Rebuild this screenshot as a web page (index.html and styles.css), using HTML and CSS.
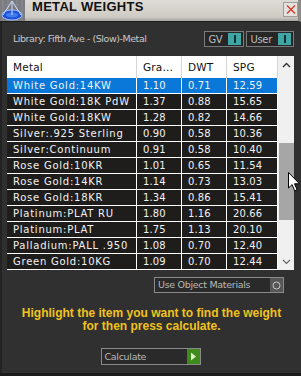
FILE: index.html
```html
<!doctype html>
<html lang="en">
<head>
<meta charset="utf-8">
<title>Metal Weights</title>
<link rel="stylesheet" href="styles.css">
</head>
<body>
<div class="win">
  <header class="titlebar">
    <span class="logo">
      <svg width="25" height="22" viewBox="0 0 25 22">
        <rect width="25" height="22" fill="#7a7c82"/>
        <path d="M3 0v22M8 0v22M17 0v22M22 0v22" stroke="#8c8e94" stroke-width="1"/>
        <ellipse cx="12" cy="15" rx="10" ry="5" fill="#1d4fd6"/>
        <ellipse cx="12" cy="15" rx="6" ry="2.6" fill="#3f7cf0"/>
        <path d="M12 1L3 15M12 1L21 15M12 1v14" stroke="#cfe0ff" stroke-width="1" fill="none"/>
        <ellipse cx="12" cy="15" rx="10" ry="5" fill="none" stroke="#9fc0ff" stroke-width="1"/>
      </svg>
    </span>
    <h1>METAL WEIGHTS</h1>
    <span class="close">
      <svg width="12" height="11" viewBox="0 0 12 11"><path d="M2 1.5l8 8M10 1.5l-8 8" stroke="#d23a2a" stroke-width="1.4"/></svg>
    </span>
  </header>

  <main class="panel">
    <div class="libbar">
      <span class="lib">Library: Fifth Ave - (Slow)-Metal</span>
      <span class="tog">GV<i></i></span>
      <span class="tog">User<i></i></span>
    </div>

    <div class="list">
      <div class="tbl">
        <div class="head"><span>Metal</span><span>Gra...</span><span>DWT</span><span>SPG</span></div>
        <div class="rows">
          <div class="row sel"><span>White Gold:14KW</span><span>1.10</span><span>0.71</span><span>12.59</span></div>
          <div class="row"><span>White Gold:18K PdW</span><span>1.37</span><span>0.88</span><span>15.65</span></div>
          <div class="row"><span>White Gold:18KW</span><span>1.28</span><span>0.82</span><span>14.66</span></div>
          <div class="row"><span>Silver:.925 Sterling</span><span>0.90</span><span>0.58</span><span>10.36</span></div>
          <div class="row"><span>Silver:Continuum</span><span>0.91</span><span>0.58</span><span>10.40</span></div>
          <div class="row"><span>Rose Gold:10KR</span><span>1.01</span><span>0.65</span><span>11.54</span></div>
          <div class="row"><span>Rose Gold:14KR</span><span>1.14</span><span>0.73</span><span>13.03</span></div>
          <div class="row"><span>Rose Gold:18KR</span><span>1.34</span><span>0.86</span><span>15.41</span></div>
          <div class="row"><span>Platinum:PLAT RU</span><span>1.80</span><span>1.16</span><span>20.66</span></div>
          <div class="row"><span>Platinum:PLAT</span><span>1.75</span><span>1.13</span><span>20.10</span></div>
          <div class="row"><span>Palladium:PALL .950</span><span>1.08</span><span>0.70</span><span>12.40</span></div>
          <div class="row"><span>Green Gold:10KG</span><span>1.09</span><span>0.70</span><span>12.44</span></div>
        </div>
      </div>
      <div class="scroll">
        <span class="arrow">
          <svg width="9" height="6" viewBox="0 0 9 6"><path d="M1 5l3.5-3.5L8 5" stroke="#333" stroke-width="1.4" fill="none"/></svg>
        </span>
        <span class="track"><span class="thumb"></span></span>
        <span class="arrow">
          <svg width="9" height="6" viewBox="0 0 9 6"><path d="M1 1l3.5 3.5L8 1" stroke="#666" stroke-width="1.2" fill="none"/></svg>
        </span>
      </div>
    </div>

    <div class="opts">
      <span class="pick">Use Object Materials<b><svg width="9" height="9" viewBox="0 0 9 9"><circle cx="4.5" cy="4.5" r="3.5" stroke="#c8c8c8" fill="none"/></svg></b></span>
    </div>

    <p class="hint">Highlight the item you want to find the weight<br>for then press calculate.</p>

    <div class="calc">
      <span class="pick">Calculate<b class="go"><svg width="7" height="9" viewBox="0 0 7 9"><path d="M1 0.5l5 4-5 4z" fill="#d8f5c0"/></svg></b></span>
    </div>
  </main>

  <!-- mouse pointer -->
  <svg class="cursor" width="13" height="20" viewBox="0 0 13 20">
    <path d="M0.5 0.5v15.5l3.6-3.4 2.6 6.2 2.4-1-2.6-6h5z" fill="#fff" stroke="#000" stroke-width="1"/>
  </svg>
</div>
</body>
</html>
```

FILE: styles.css
```css
body{margin:0;background:#303030;}
.win{position:relative;width:301px;height:376px;display:flex;flex-direction:column;background:#303030;border-bottom:3px solid #1b1b1b;box-sizing:border-box;overflow:hidden;}

/* title bar */
.titlebar{display:flex;align-items:flex-start;height:22px;flex:none;background:linear-gradient(#dedbd6,#cfccc6 80%,#a9a7a3);border-bottom:1px solid #1e1e1e;box-sizing:border-box;border-right:3px solid #8d8b88;}
.logo{display:block;width:25px;height:21px;overflow:hidden;}
.logo svg{display:block;}
.titlebar h1{margin:0 0 0 7px;font:bold 13px/14.5px "Liberation Sans",Arial,sans-serif;color:#111;letter-spacing:.3px;flex:1;}
.close{display:flex;align-items:center;justify-content:center;width:13px;height:13px;margin-top:2px;border:1px solid #a09e9a;background:#e4e2de;}

/* main panel */
.panel{flex:1;display:flex;flex-direction:column;padding:0 7px;border-left:2px solid #232323;}
.libbar{display:flex;align-items:center;gap:2px;padding:9px 0 9px 4px;}
.lib{flex:1;font:9.5px/16px "DejaVu Sans",sans-serif;color:#c9c9c9;letter-spacing:-.45px;}
.tog{display:flex;align-items:center;justify-content:space-between;height:16px;box-sizing:border-box;border:1px solid #7b7b7b;background:#262626;padding:0 2px 0 3px;font:10px "DejaVu Sans",sans-serif;color:#bdbdbd;gap:6px;letter-spacing:-.3px;}
.tog i{display:flex;justify-content:center;width:13px;height:12px;background:#3fa5a5;}
.tog i::after{content:"";width:2px;height:8px;margin-top:2px;background:#10302f;}

/* list */
.list{display:flex;margin-left:-2px;}
.tbl{width:271px;}
.head{display:grid;grid-template-columns:129px 44px 44px 50px;gap:1px;height:22px;background:#d5d5d5;padding-right:1px;}
.head span{background:#fff;padding-left:6px;font:10.5px/22px "DejaVu Sans",sans-serif;color:#111;letter-spacing:.2px;}
.rows{display:flex;flex-direction:column;gap:1px;background:#fff;padding:0 1px 1px 0;}
.row{display:grid;grid-template-columns:129px 44px 44px 50px;gap:1px;height:15px;}
.row span{background:#1f1d1b;padding-left:6px;font:10px/15px "DejaVu Sans",sans-serif;color:#f2f2f2;white-space:nowrap;overflow:hidden;letter-spacing:.75px;}
.row span+span{letter-spacing:.1px;}
.row.sel span{background:#0a78d8;}
.scroll{width:16px;display:flex;flex-direction:column;background:#f0f0f0;}
.arrow{display:flex;align-items:center;justify-content:center;height:17px;}
.track{flex:1;padding-left:1px;}
.thumb{display:block;height:77px;background:#a6a6a6;margin-top:70px;}

/* options */
.opts{display:flex;justify-content:flex-end;margin-top:7px;padding-right:10px;}
.pick{display:flex;align-items:center;justify-content:space-between;box-sizing:border-box;border:1px solid #8a8a8a;background:#2a2a2a;font:9.5px/14px "DejaVu Sans",sans-serif;color:#b9b9b9;letter-spacing:-.3px;}
.opts .pick{width:130px;height:16px;padding-left:3px;}
.pick b{display:flex;align-items:center;justify-content:center;width:13px;height:14px;background:#565656;}

.hint{margin:14px 0 0;text-align:center;font:bold 12px/13px "Liberation Sans",Arial,sans-serif;color:#f1c21c;}

.calc{display:flex;justify-content:center;margin-top:15px;padding-right:2px;}
.calc .pick{width:100px;height:17px;padding-left:3px;}
.pick b.go{background:#3e8b1c;height:15px;}

.cursor{position:absolute;left:288px;top:172px;}
```
